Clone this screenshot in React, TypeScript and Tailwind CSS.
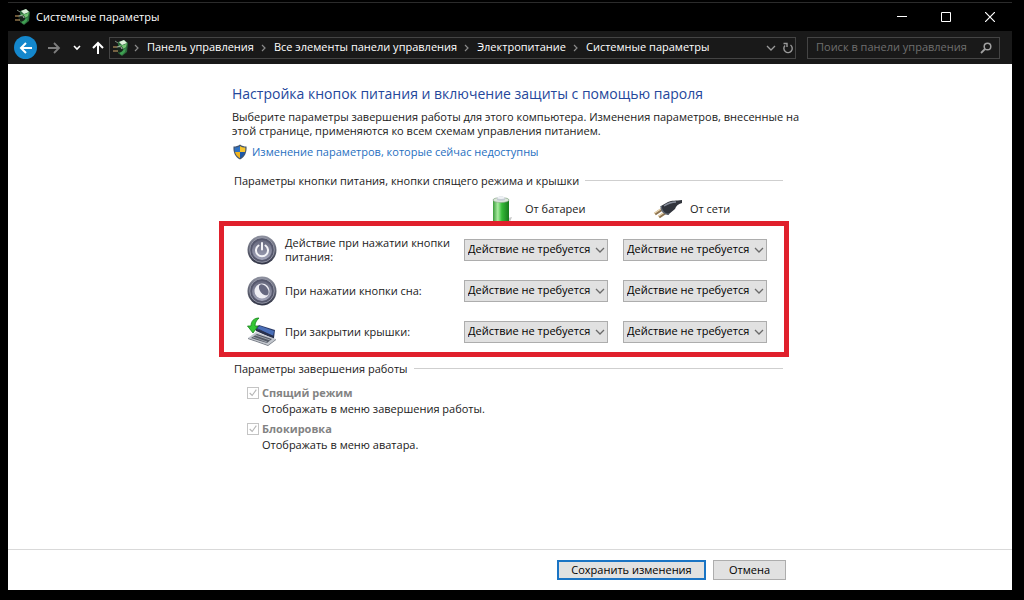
import React, { useState } from "react"

const ACTIONS = ["Действие не требуется", "Сон", "Гибернация", "Завершение работы"]

const CRUMBS = [
  "Панель управления",
  "Все элементы панели управления",
  "Электропитание",
  "Системные параметры",
]

const PowerPlanIcon = () => (
  <svg viewBox="0 0 18 18" className="size-[18px] shrink-0">
    <path d="M6 3 12 1l4 3-1 9-5 4-4-3z" fill="#2d6a3c" />
    <path d="m7 3 5-2 3 3-5 2z" fill="#dff0dc" />
    <path d="M7 6c3 1 6 0 8-2l-1 4c-2 2-4 2-7 1z" fill="#72c472" />
    <path d="M8 11c2 1 4 0 6-2l-1 4-3 3-2-1z" fill="#3fa052" />
    <path d="M4 7c4-1 7 0 7 3s-3 4-6 3z" fill="#16241b" />
    <path d="M5 8c3-1 5 0 5 2" fill="none" stroke="#b9c9b8" />
    <path d="M1 8h4M1 12h5" stroke="#d3a96c" strokeWidth="1.2" />
    <path d="m3 2 3 2" stroke="#7d8b7e" />
  </svg>
)

const ShieldIcon = () => (
  <svg viewBox="0 0 16 16" className="size-4 shrink-0">
    <path d="M8 .5C10 2 12 2.500 14.500 2.500 15 8 13 13 8 15.500 3 13 1 8 1.500 2.500 4 2.500 6 2 8 .5z" fill="#44566e" />
    <path d="M8 2C6.500 3 5 3.500 2.700 3.600 2.500 5 2.600 6.500 3 8h5z" fill="#2f72c4" />
    <path d="M8 2c1.500 1 3 1.500 5.300 1.600.2 1.400.1 2.900-.3 4.400H8z" fill="#f7c52d" />
    <path d="M3 8c.8 2.800 2.500 4.900 5 6.200V8z" fill="#f2b51f" />
    <path d="M13 8c-.8 2.800-2.500 4.900-5 6.200V8z" fill="#1f58a6" />
  </svg>
)

const BatteryIcon = () => (
  <svg viewBox="0 0 24 26" className="h-[26px] w-6 shrink-0">
    <defs>
      <linearGradient id="cell">
        <stop offset="0" stopColor="#3b9c3b" />
        <stop offset=".3" stopColor="#a9eca0" />
        <stop offset=".55" stopColor="#35bb38" />
        <stop offset="1" stopColor="#167a1c" />
      </linearGradient>
    </defs>
    <path d="m18 22 4-1-2 5h-2z" fill="#c9c9c9" />
    <path d="M3 4c0-3 16-3 16 0v22H3z" fill="url(#cell)" />
    <ellipse cx="11" cy="4" rx="8" ry="2.500" fill="#dbe6da" stroke="#8fa58f" strokeWidth=".6" />
    <path d="M7 2c0-2 8-2 8 0v2c0 1-8 1-8 0z" fill="#c5ccd3" />
    <ellipse cx="11" cy="1.700" rx="3.600" ry="1.200" fill="#eef1f4" />
  </svg>
)

const PlugIcon = () => (
  <svg viewBox="0 0 32 20" className="h-5 w-8 shrink-0">
    <path d="M3 15 12 9M7 18l9-6" stroke="#8d7350" strokeWidth="3" />
    <path d="M2 14.500 11 8.500M6 17.500l9-6" stroke="#ecd9b4" strokeWidth="1.200" />
    <path d="m9 7 7-4c4-2 8-1 14-2v3c-4 1-6 3-7 6l-6 5c-4 1-8-3-8-8z" fill="#31343c" />
    <path d="M12 7c3-2 6-4 12-4" fill="none" stroke="#898f9c" strokeWidth="1.500" />
    <path d="M9 7c0 5 4 9 8 8" fill="none" stroke="#5f6570" strokeWidth="1.500" />
  </svg>
)

const RoundButton = ({ children }: { children: React.ReactNode }) => (
  <svg viewBox="0 0 30 30" className="size-[30px] shrink-0">
    <defs>
      <linearGradient id="rim" x2="0" y2="1">
        <stop offset="0" stopColor="#8f92a0" />
        <stop offset="1" stopColor="#303344" />
      </linearGradient>
      <linearGradient id="face" x2="0" y2="1">
        <stop offset="0" stopColor="#65677c" />
        <stop offset="1" stopColor="#a4a6ba" />
      </linearGradient>
    </defs>
    <circle cx="15" cy="15" r="14.500" fill="url(#rim)" />
    <circle cx="15" cy="15" r="12.300" fill="#56586d" stroke="#a2a4b4" strokeWidth=".8" />
    <circle cx="15" cy="15" r="10" fill="url(#face)" />
    {children}
  </svg>
)

const PowerButtonIcon = () => (
  <RoundButton>
    <path d="M11.500 10.500a6 6 0 1 0 7 0" fill="none" stroke="#f4f4f8" strokeWidth="2" strokeLinecap="round" />
    <path d="M15 8v6.500" stroke="#f4f4f8" strokeWidth="2" strokeLinecap="round" />
  </RoundButton>
)

const SleepButtonIcon = () => (
  <RoundButton>
    <circle cx="15" cy="15" r="7.500" fill="#eeeef4" />
    <ellipse cx="16.800" cy="13.800" rx="3.800" ry="6.300" transform="rotate(-38 16.800 13.800)" fill="#666880" />
  </RoundButton>
)

const LidIcon = () => (
  <svg viewBox="0 0 30 30" className="size-[30px] shrink-0">
    <path d="m8 11 4-3 16 5-1 8z" fill="#2b3a66" />
    <path d="m10 11 3-2 14 5-1 5z" fill="#4a6fb8" />
    <path d="m8 11 19 8v3L9 14z" fill="#27304c" />
    <path d="m1 21 8-6 20 7-8 6z" fill="#c3c7ce" />
    <path d="m4 21 6-4 15 5-5 4z" fill="#565c67" />
    <path d="m6 20 14 5M8 18l15 5" stroke="#a9aeb8" strokeWidth=".8" />
    <path d="m1 21 20 7 8-6v1l-8 6L1 22z" fill="#747a84" />
    <path d="M12 1C7 1 4 4 4 9H.500L6 16l5-7H8c0-3 1-5 4-8z" fill="#34c734" stroke="#16811b" strokeWidth=".8" />
  </svg>
)

const Chevron = ({ className }: { className: string }) => (
  <svg viewBox="0 0 10 10" className={className}>
    <path d="m1 3 4 4 4-4" fill="none" stroke="currentColor" strokeWidth="1.300" />
  </svg>
)

const CrumbArrow = () => (
  <svg viewBox="0 0 6 8" className="h-2 w-[6px] shrink-0 text-[#8a8a8a]">
    <path d="m1 1 3 3-3 3" fill="none" stroke="currentColor" strokeWidth="1.200" />
  </svg>
)

const TitleBar = () => (
  <header className="flex h-[29px] items-center border-t border-[#2b2b2b] bg-black pl-[6px] text-white">
    <PowerPlanIcon />
    <h1 className="ml-1 flex-1 text-[11px]">Системные параметры</h1>
    <button aria-label="Свернуть" className="flex h-7 w-11 items-center justify-center">
      <svg viewBox="0 0 10 10" className="size-[10px]"><path d="M0 4.500h10" stroke="#fff" /></svg>
    </button>
    <button aria-label="Развернуть" className="flex h-7 w-11 items-center justify-center">
      <svg viewBox="0 0 10 10" className="size-[10px]"><path d="M.5.5h9v9h-9z" fill="none" stroke="#fff" /></svg>
    </button>
    <button aria-label="Закрыть" className="flex h-7 w-11 items-center justify-center">
      <svg viewBox="0 0 10 10" className="size-[10px]"><path d="m0 0 10 10M10 0 0 10" stroke="#fff" strokeWidth="1.200" /></svg>
    </button>
  </header>
)

const AddressBar = () => (
  <nav className="flex h-[33px] items-center bg-[#191919] pl-[6px] pr-3 text-white">
    <button aria-label="Назад" className="flex size-[23px] items-center justify-center rounded-full bg-[#1487cc]">
      <svg viewBox="0 0 14 14" className="size-[14px]">
        <path d="M13 7H2M7 2 2 7l5 5" fill="none" stroke="#fff" strokeWidth="2" />
      </svg>
    </button>
    <button aria-label="Вперед" className="ml-[10px] text-[#7d7d7d]">
      <svg viewBox="0 0 14 14" className="size-[14px]">
        <path d="M1 7h11M7 2l5 5-5 5" fill="none" stroke="currentColor" strokeWidth="1.800" />
      </svg>
    </button>
    <button aria-label="Последние расположения" className="ml-3">
      <svg viewBox="0 0 8 8" className="size-2">
        <path d="m1 2 3 3 3-3" fill="none" stroke="#fff" strokeWidth="1.600" />
      </svg>
    </button>
    <button aria-label="Вверх" className="ml-[10px]">
      <svg viewBox="0 0 14 14" className="size-[14px]">
        <path d="M7 13V2M2 7l5-5 5 5" fill="none" stroke="#fff" strokeWidth="2" />
      </svg>
    </button>

    <div className="ml-1 flex h-[22px] min-w-0 flex-1 items-center border border-[#444] pl-[2px]">
      <PowerPlanIcon />
      <ol className="ml-1 flex flex-1 items-center">
        {CRUMBS.map((crumb) => (
          <li key={crumb} className="flex items-center whitespace-nowrap">
            <CrumbArrow />
            <a href="#" className="px-[7px] text-[11px]">{crumb}</a>
          </li>
        ))}
      </ol>
      <button aria-label="Предыдущие расположения" className="text-[#9a9a9a]">
        <Chevron className="size-[10px]" />
      </button>
      <button aria-label="Обновить" className="ml-[6px] mr-px">
        <svg viewBox="0 0 12 12" className="size-3">
          <path d="M3 3.500a4.200 4.200 0 1 0 5.500-.5M1.500 1.500H5V5" fill="none" stroke="#9a9a9a" strokeWidth="1.400" />
        </svg>
      </button>
    </div>

    <div className="ml-[11px] flex h-[22px] w-[193px] items-center border border-[#444] pl-2 pr-[7px]">
      <input
        type="search"
        aria-label="Поиск"
        placeholder="Поиск в панели управления"
        className="min-w-0 flex-1 bg-transparent text-[11px] text-white placeholder:text-[#6f6f6f] focus:outline-none"
      />
      <svg viewBox="0 0 12 12" className="size-3 shrink-0">
        <circle cx="7.500" cy="4.500" r="3.300" fill="none" stroke="#a0a0a0" strokeWidth="1.500" />
        <path d="M5 7 1 11" stroke="#a0a0a0" strokeWidth="1.800" />
      </svg>
    </div>
  </nav>
)

const SectionTitle = ({ children }: { children: React.ReactNode }) => (
  <div className="flex items-center gap-[6px] pl-[15px] pr-[6px]">
    <h3 className="text-[11px] leading-[15px]">{children}</h3>
    <div className="h-px flex-1 bg-[#cfcfcf]" />
  </div>
)

const ActionSelect = ({ label }: { label: string }) => {
  const [value, setValue] = useState<string>(ACTIONS[0])

  return (
    <div className="relative">
      <select
        aria-label={label}
        value={value}
        onChange={(e) => setValue(e.target.value)}
        className="block h-[22px] w-full appearance-none border border-[#adadad] bg-[#e1e1e1] pl-[3px] text-[11px] text-black"
      >
        {ACTIONS.map((action) => (
          <option key={action}>{action}</option>
        ))}
      </select>
      <Chevron className="pointer-events-none absolute right-[3px] top-[6px] size-[10px] text-[#6a6a6a]" />
    </div>
  )
}

type ActionRowProps = {
  icon: React.ReactNode
  label: string
}

const ActionRow: React.FC<ActionRowProps> = ({ icon, label }) => (
  <div className="flex h-[41px] items-center">
    <div className="w-[38px]">{icon}</div>
    <p className="flex-1 text-[11px] leading-[14px]">{label}</p>
    <div className="grid grid-cols-[144px_144px] gap-[15px]">
      <ActionSelect label={label + " от батареи"} />
      <ActionSelect label={label + " от сети"} />
    </div>
  </div>
)

type ShutdownOptionProps = {
  title: string
  hint: string
}

const ShutdownOption: React.FC<ShutdownOptionProps> = ({ title, hint }) => (
  <div className="mb-1 pl-7 text-[11px] leading-4">
    <label className="flex items-center gap-[3px] font-bold text-[#838383]">
      <input type="checkbox" checked disabled readOnly className="sr-only" />
      <svg viewBox="0 0 12 12" className="size-3 border border-[#c4c4c4]">
        <path d="m2 6 3 3 5-7" fill="none" stroke="#b5b5b5" strokeWidth="1.300" />
      </svg>
      {title}
    </label>
    <p className="pl-[15px]">{hint}</p>
  </div>
)

const App = () => {
  return (
    <div className="flex min-h-screen flex-col bg-black pb-[10px] pl-2 pr-3 pt-[2px] font-['Open_Sans','Noto_Sans',sans-serif]">
      <TitleBar />
      <AddressBar />

      <main className="flex-1 bg-white pl-[211px] text-[#1a1a1a]">
        <div className="max-w-[570px] pt-5">
          <div className="px-[13px]">
            <h2 className="text-[14px] leading-5 text-[#24479b]">
              Настройка кнопок питания и включение защиты с помощью пароля
            </h2>
            <p className="-mr-8 mt-[6px] text-[11px] leading-[14px]">
              Выберите параметры завершения работы для этого компьютера. Изменения параметров, внесенные на
              этой странице, применяются ко всем схемам управления питанием.
            </p>
            <a href="#" className="mt-[6px] flex items-center gap-1 text-[11px] leading-4 text-[#1f6fbf]">
              <ShieldIcon />
              Изменение параметров, которые сейчас недоступны
            </a>
          </div>

          <section className="mt-[13px]">
            <SectionTitle>Параметры кнопки питания, кнопки спящего режима и крышки</SectionTitle>
            <div className="mt-2 flex h-[25px] overflow-hidden pl-[271px] text-[11px] leading-[26px]">
              <div className="flex w-[162px] gap-[11px]">
                <BatteryIcon />
                От батареи
              </div>
              <div className="flex items-center gap-[6px]">
                <PlugIcon />
                От сети
              </div>
            </div>

            <div className="border-[5px] border-[#e0202c] pl-[23px] pr-[17px] pt-[3px]">
              <ActionRow icon={<PowerButtonIcon />} label="Действие при нажатии кнопки питания:" />
              <ActionRow icon={<SleepButtonIcon />} label="При нажатии кнопки сна:" />
              <ActionRow icon={<LidIcon />} label="При закрытии крышки:" />
            </div>
          </section>

          <section className="mt-1">
            <SectionTitle>Параметры завершения работы</SectionTitle>
            <div className="mt-[9px]">
              <ShutdownOption title="Спящий режим" hint="Отображать в меню завершения работы." />
              <ShutdownOption title="Блокировка" hint="Отображать в меню аватара." />
            </div>
          </section>
        </div>
      </main>

      <footer className="flex h-[41px] items-center justify-end gap-[7px] border-t border-[#d9d9d9] bg-white pr-[226px] text-[11px] text-black">
        <button className="h-5 w-[149px] border-2 border-[#1a74c4] bg-[#e1e1e1]">Сохранить изменения</button>
        <button className="h-5 w-[73px] border border-[#adadad] bg-[#e1e1e1]">Отмена</button>
      </footer>
    </div>
  )
}

export default App
